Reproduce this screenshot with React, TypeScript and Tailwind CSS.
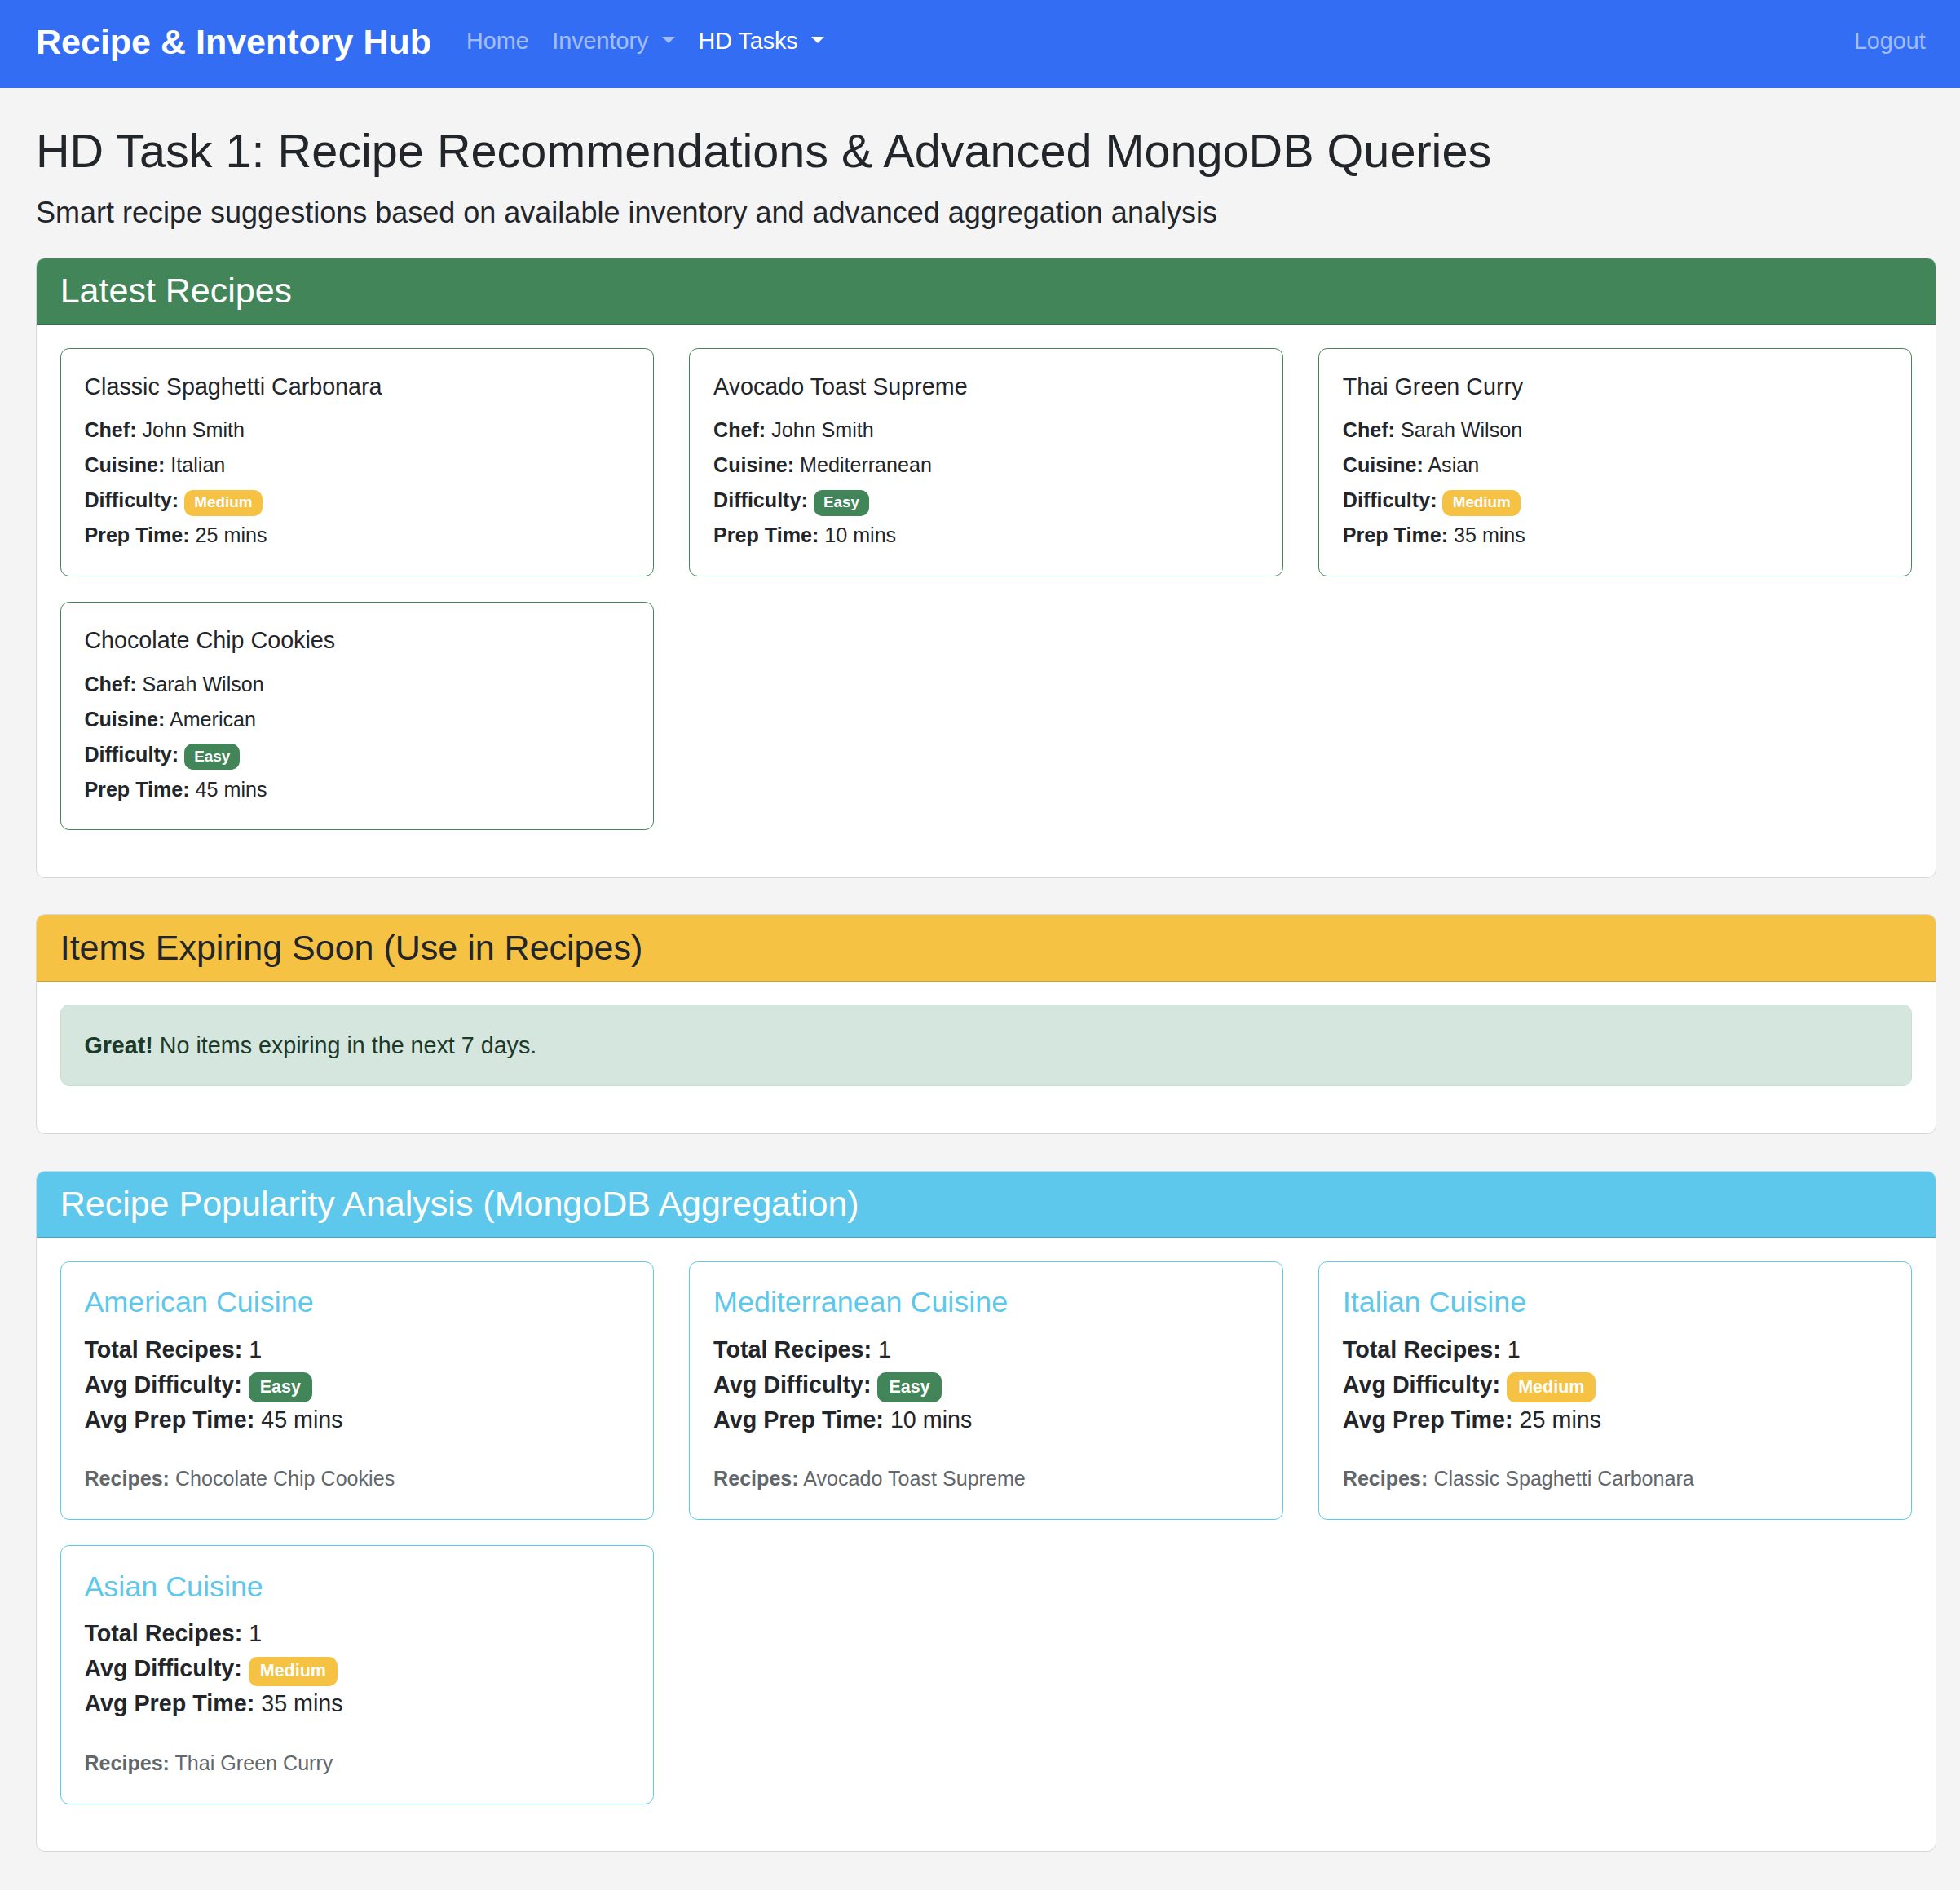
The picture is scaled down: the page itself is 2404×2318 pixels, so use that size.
import React from 'react';

type Level = 'Easy' | 'Medium';

interface Recipe {
  title: string;
  chef: string;
  cuisine: string;
  difficulty: Level;
  prep: number;
}

interface CuisineStat {
  cuisine: string;
  total: number;
  difficulty: Level;
  prep: number;
  recipes: string;
}

const RECIPES: Recipe[] = [
  { title: 'Classic Spaghetti Carbonara', chef: 'John Smith', cuisine: 'Italian', difficulty: 'Medium', prep: 25 },
  { title: 'Avocado Toast Supreme', chef: 'John Smith', cuisine: 'Mediterranean', difficulty: 'Easy', prep: 10 },
  { title: 'Thai Green Curry', chef: 'Sarah Wilson', cuisine: 'Asian', difficulty: 'Medium', prep: 35 },
  { title: 'Chocolate Chip Cookies', chef: 'Sarah Wilson', cuisine: 'American', difficulty: 'Easy', prep: 45 },
];

const STATS: CuisineStat[] = [
  { cuisine: 'American', total: 1, difficulty: 'Easy', prep: 45, recipes: 'Chocolate Chip Cookies' },
  { cuisine: 'Mediterranean', total: 1, difficulty: 'Easy', prep: 10, recipes: 'Avocado Toast Supreme' },
  { cuisine: 'Italian', total: 1, difficulty: 'Medium', prep: 25, recipes: 'Classic Spaghetti Carbonara' },
  { cuisine: 'Asian', total: 1, difficulty: 'Medium', prep: 35, recipes: 'Thai Green Curry' },
];

const Badge: React.FC<{ level: Level }> = ({ level }) => (
  <span
    className={`inline-block whitespace-nowrap rounded-[10.8px] px-[0.65em] py-[0.35em] text-[0.75em] font-bold leading-none text-white align-baseline ${
      level === 'Easy' ? 'bg-[#418558]' : 'bg-[#f5c244]'
    }`}
  >
    {level}
  </span>
);

const Caret = () => (
  <span className="ml-[16.5px] inline-block align-[0.255em] border-x-[0.3em] border-t-[0.3em] border-x-transparent border-t-current" />
);

const Panel: React.FC<{ title: string; head: string; children: React.ReactNode }> = ({ title, head, children }) => (
  <section className="mb-[44.5px] overflow-hidden rounded-[10.8px] border border-[#d7d7d7] bg-white">
    <div className={`border-b border-black/[0.175] px-[28.7px] py-[14.35px] ${head}`}>
      <h4 className="text-[43px] font-normal leading-[1.2]">{title}</h4>
    </div>
    <div className="p-[28.7px]">{children}</div>
  </section>
);

// small text sits inside a 1rem line, like <small> in a <p>
const Small: React.FC<{ children: React.ReactNode; muted?: boolean }> = ({ children, muted }) => (
  <span className={`text-[25.1px] leading-[1.5] ${muted ? 'text-[#62676c]' : ''}`}>{children}</span>
);

const RecipeCard: React.FC<{ recipe: Recipe }> = ({ recipe }) => (
  <div className="rounded-[10.8px] border border-[#418558] bg-white p-[28.7px]">
    <h6 className="mb-[14.35px] text-[28.7px] font-normal leading-[1.2]">{recipe.title}</h6>
    <div className="text-[28.7px] leading-[43px]">
      <div>
        <Small><b>Chef:</b> {recipe.chef}</Small>
      </div>
      <div>
        <Small><b>Cuisine:</b> {recipe.cuisine}</Small>
      </div>
      <div>
        <Small><b>Difficulty:</b> <Badge level={recipe.difficulty} /></Small>
      </div>
      <div>
        <Small><b>Prep Time:</b> {recipe.prep} mins</Small>
      </div>
    </div>
  </div>
);

const StatCard: React.FC<{ stat: CuisineStat }> = ({ stat }) => (
  <div className="rounded-[10.8px] border border-[#5ec8ec] bg-white p-[28.7px]">
    <h5 className="mb-[14.35px] text-[35.9px] font-normal leading-[1.2] text-[#5ec8ec]">{stat.cuisine} Cuisine</h5>
    <div className="mb-[28.7px] text-[28.7px] leading-[43px]">
      <div><b>Total Recipes:</b> {stat.total}</div>
      <div><b>Avg Difficulty:</b> <Badge level={stat.difficulty} /></div>
      <div><b>Avg Prep Time:</b> {stat.prep} mins</div>
    </div>
    <div className="text-[28.7px] leading-[43px]">
      <Small muted><b>Recipes:</b> {stat.recipes}</Small>
    </div>
  </div>
);

export default function App() {
  return (
    <div className="min-h-screen bg-[#f4f4f4] font-['Liberation_Sans',Arial,sans-serif] text-[#222529]">
      <nav className="flex h-[107.6px] items-center bg-[#336df4] pb-[6px] pl-[44px] pr-[28px]">
        <span className="mr-[28.7px] text-[43px] font-bold leading-[1.5] text-white">Recipe &amp; Inventory Hub</span>
        <div className="flex items-center text-[28.7px] leading-[43px]">
          <span className="px-[14.35px] text-white/55">Home</span>
          <span className="px-[14.35px] text-white/55">
            Inventory
            <Caret />
          </span>
          <span className="px-[14.35px] text-white">
            HD Tasks
            <Caret />
          </span>
        </div>
        <span className="ml-auto px-[14.35px] text-[28.7px] leading-[43px] text-white/55">Logout</span>
      </nav>

      <main className="pl-[44px] pr-[29px] pt-[43.4px] pb-[2px]">
        <h1 className="mb-[14.35px] text-[57.6px] font-normal leading-[1.2]">
          HD Task 1: Recipe Recommendations &amp; Advanced MongoDB Queries
        </h1>
        <p className="mb-[27.5px] text-[36px] leading-[1.5]">
          Smart recipe suggestions based on available inventory and advanced aggregation analysis
        </p>

        <Panel title="Latest Recipes" head="bg-[#418558] text-white">
          <div className="mb-[29px] grid grid-cols-3 gap-x-[43.5px] gap-y-[31px]">
            {RECIPES.map((r) => (
              <RecipeCard key={r.title} recipe={r} />
            ))}
          </div>
        </Panel>

        <Panel title="Items Expiring Soon (Use in Recipes)" head="bg-[#f5c244] text-[#222529]">
          <div className="mb-[29px] rounded-[10.8px] border border-[#c6dfd2] bg-[#d4e6dd] px-[28.7px] py-[27.5px] text-[28.7px] leading-[43px] text-[#1c3a2a]">
            <b>Great!</b> No items expiring in the next 7 days.
          </div>
        </Panel>

        <Panel title="Recipe Popularity Analysis (MongoDB Aggregation)" head="bg-[#5ec8ec] text-white">
          <div className="mb-[29px] grid grid-cols-3 gap-x-[43.5px] gap-y-[31px]">
            {STATS.map((s) => (
              <StatCard key={s.cuisine} stat={s} />
            ))}
          </div>
        </Panel>
      </main>
    </div>
  );
}
